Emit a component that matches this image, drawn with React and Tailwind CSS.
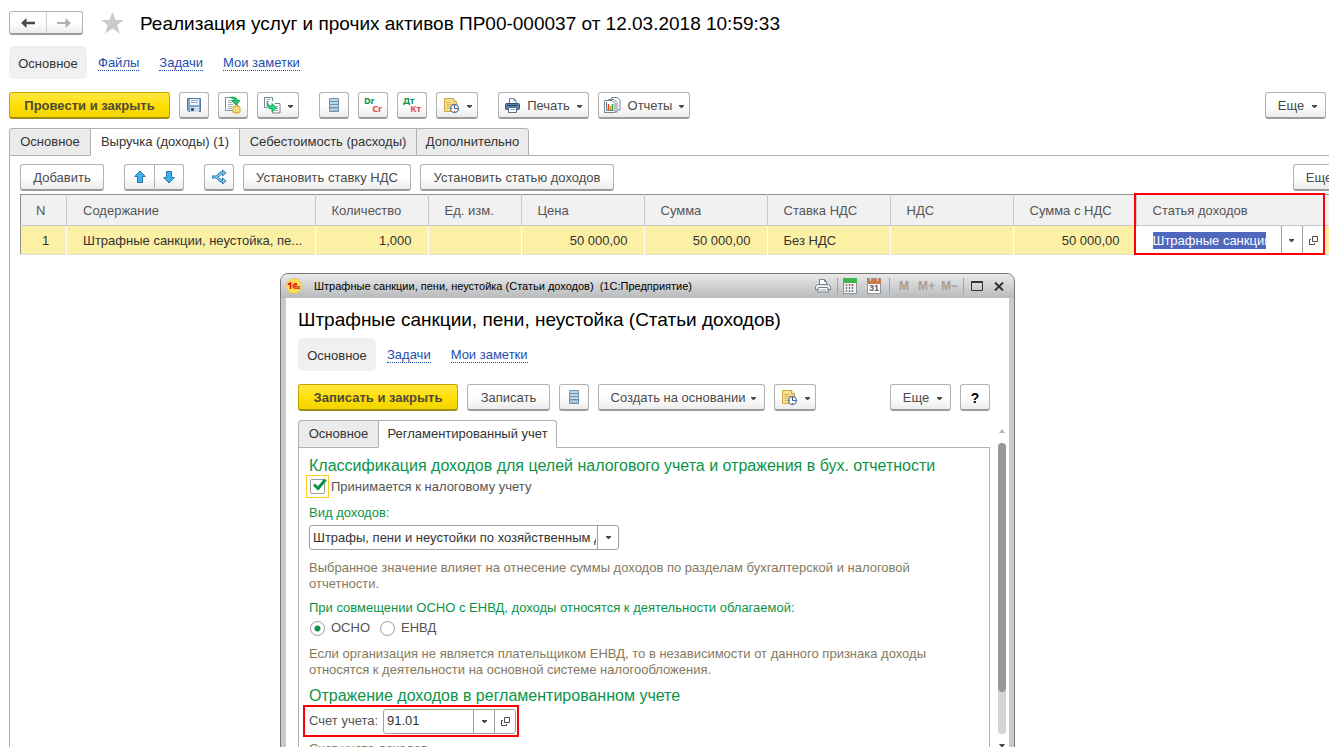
import React from "react";

const btnSkin =
  "flex shrink-0 items-center justify-center rounded-[3px] border border-[#b3b3b3] border-b-2 border-b-[#9c9c9c] bg-linear-to-b from-white from-50% to-[#ececec] text-[#4a4a4a] whitespace-nowrap";
const btnBase = btnSkin + " h-[27px] pt-0.5";
const primaryBtn =
  "flex h-[27px] shrink-0 items-center justify-center rounded-[3px] border border-[#c2a500] border-b-2 border-b-[#a08c10] bg-linear-to-b from-[#ffe83c] via-[#ffe000] to-[#f2d400] pt-0.5 font-bold text-[#4d4a3d] whitespace-nowrap";

function Caret({ className = "" }) {
  return (
    <svg width="5" height="3" viewBox="0 0 5 3" className={"shrink-0 " + className} aria-hidden="true">
      <path d="M0 0h5v1L3 3H2L0 1z" fill="#4a4a4a" />
    </svg>
  );
}

function Btn({ className = "", label, children }) {
  return (
    <button type="button" aria-label={label} className={btnBase + " " + className}>
      {children}
    </button>
  );
}

function SaveIcon() {
  return (
    <svg width="16" height="16" viewBox="0 0 16 16" className="-mt-0.5" aria-hidden="true">
      <path d="M1.500 1.500h13v13h-11.500l-1.500-1.500z" fill="#79a6d3" stroke="#4d78a5" />
      <rect x="4" y="2" width="9" height="6" fill="#f4f8fc" />
      <path d="M5 3.500h7M5 5.500h7" stroke="#8fa9c4" />
      <rect x="4" y="10" width="9" height="5" fill="#d4dde6" />
      <rect x="5" y="11" width="3" height="3" fill="#3d5c80" />
    </svg>
  );
}

function PostIcon() {
  return (
    <svg width="18" height="18" viewBox="0 0 18 18" className="-mt-0.5" aria-hidden="true">
      <path d="M7 1.500H1.500v13H9M13.500 7v3" fill="none" stroke="#7f8f9f" />
      <path d="M4 4.500h3M4 6.500h4M4 8.500h5M4 10.500h4M4 12.500h4" stroke="#a2aab2" />
      <path d="M6 1.500c4-1 7 0 7.500 3H16l-4 4.500-4.500-4.500H10c0-1.500-1.500-2.500-4-3z" fill="#1fc96b" stroke="#0c8f49" strokeWidth=".8" />
      <rect x="9" y="10" width="7" height="7" rx="1.500" fill="#f3cb55" stroke="#c89a26" strokeWidth=".8" />
      <path d="M9.500 12.300h6M9.500 14.700h6" stroke="#fff3c0" />
    </svg>
  );
}

function CreateBasedIcon() {
  return (
    <svg width="17" height="17" viewBox="0 0 17 17" className="-mt-0.5" aria-hidden="true">
      <path d="M3 10.500H.5v-10h8V4" fill="#fff" stroke="#6f8296" />
      <path d="M2.500 2.500h4M2.500 4.500h2" stroke="#9aa7b4" />
      <path d="M11 6.500h5v9.500H8.500v-2" fill="#fff" stroke="#6f8296" />
      <path d="M12 9.500h2M12 11.500h2M11 13.500h3" stroke="#9aa7b4" />
      <path d="M3.500 4.500c.2 3 1.500 4.500 4.500 4.500V6.500l4.500 4.500L8 15v-3c-4 0-6-3-4.500-7.500z" fill="#24d67c" stroke="#0c9a52" strokeWidth=".8" />
    </svg>
  );
}

function ListIcon() {
  return (
    <svg width="12" height="16" viewBox="0 0 12 16" className="-mt-0.5" aria-hidden="true">
      <rect x="1" y="1" width="10" height="14" rx="1" fill="#6f93b0" />
      <path d="M2 3h8M2 6h8M2 9h8M2 12.500h8" stroke="#bdd6e6" strokeWidth="1.800" />
    </svg>
  );
}

function LetterPair({ a, b }) {
  return (
    <span className="-mt-0.5 grid h-4 w-[18px] grid-rows-2 font-['Noto_Sans',sans-serif] text-[9px] leading-[8px] font-bold" aria-hidden="true">
      <span className="text-left text-[#0f9150]">{a}</span>
      <span className="text-right text-[#dd4a4a]">{b}</span>
    </span>
  );
}

function NoteClockIcon() {
  return (
    <svg width="17" height="17" viewBox="0 0 17 17" className="-mt-0.5" aria-hidden="true">
      <path d="M1.500 1.500h9l3 3v10h-12z" fill="#f7df8e" stroke="#cfa744" />
      <path d="M10.500 1.500v3h3" fill="#fff4c4" stroke="#cfa744" />
      <path d="M3.500 5.500h5M3.500 7.500h5M3.500 9.500h3M3.500 11.500h3" stroke="#d9b455" />
      <circle cx="11.500" cy="11.500" r="4" fill="#fff" stroke="#4d7fb0" strokeWidth="1.300" />
      <path d="M11.500 9v2.500H14" fill="none" stroke="#375a80" />
      <path d="M11 8.500h1M8.500 11v1M11 14.500h1M14.500 11v1" stroke="#e03232" />
    </svg>
  );
}

function PrinterIcon() {
  return (
    <svg width="15" height="15" viewBox="0 0 15 15" className="-mt-0.5" aria-hidden="true">
      <path d="M4.500 6V.5H9l2 2V6" fill="#fff" stroke="#6d8094" />
      <path d="M9 .5v2h2" fill="none" stroke="#6d8094" />
      <rect x=".5" y="5.500" width="14" height="6" rx="1" fill="#5a86b0" stroke="#2e5479" />
      <path d="M2 7.500h11" stroke="#27435f" />
      <path d="M3.500 9.500h8v5h-8z" fill="#fff" stroke="#55708b" />
      <path d="M5 11.500h5" stroke="#9aabba" />
    </svg>
  );
}

function ReportsIcon() {
  return (
    <svg width="17" height="17" viewBox="0 0 17 17" className="-mt-0.5" aria-hidden="true">
      <path d="M7.500 3V.5h6l2.500 2.500v10h-2.500" fill="#fff" stroke="#72869a" />
      <path d="M4.500 4V2.500h5.500l3 3v9.500h-2" fill="#fff" stroke="#72869a" />
      <path d="M.5 3.500H8l3 3v9H.5z" fill="#fff" stroke="#72869a" />
      <path d="M2.500 5v8.500h7" fill="none" stroke="#6b7a88" />
      <path d="M4.500 7v6" stroke="#e04a3a" strokeWidth="1.600" />
      <path d="M6.500 9v4" stroke="#d9a520" strokeWidth="1.400" />
      <path d="M8.500 7v6" stroke="#38a838" strokeWidth="1.600" />
    </svg>
  );
}

function BlueArrow({ down }) {
  return (
    <svg width="12" height="14" viewBox="0 0 12 14" className={down ? "-mt-0.5 rotate-180" : "-mt-0.5"} aria-hidden="true">
      <path d="M6 1l5.300 5.500H8.500v6h-5v-6H.7z" fill="#3fb1ee" stroke="#2477a8" strokeLinejoin="round" />
    </svg>
  );
}

function ShareIcon() {
  return (
    <svg width="16" height="16" viewBox="0 0 16 16" className="-mt-0.5" aria-hidden="true">
      <path d="M1 8h4.500L10 4h2M5.500 8l4.500 4h2" fill="none" stroke="#2a78ad" strokeWidth="3" />
      <path d="M11.500 1l3.500 3-3.500 3zM11.500 9l3.500 3-3.500 3z" fill="#8fd4f8" stroke="#2a78ad" strokeLinejoin="round" />
      <path d="M1.500 8h4L10 4h2.500M5.500 8l4.500 4h2.500" fill="none" stroke="#8fd4f8" strokeWidth="1.200" />
    </svg>
  );
}

function OpenIcon() {
  return (
    <svg width="9" height="9" viewBox="0 0 9 9" aria-hidden="true">
      <path d="M3.500.5h5v5h-5zM2 3.500H.5v5h5V7" fill="none" stroke="#4a4a4a" />
    </svg>
  );
}

function OneCLogo() {
  return (
    <svg width="16" height="16" viewBox="0 0 16 16" aria-hidden="true">
      <circle cx="8" cy="8" r="7.600" fill="#ffdf55" stroke="#e3b93a" strokeWidth=".6" />
      <path d="M2 6.500L4.500 5v6" fill="none" stroke="#d91515" strokeWidth="1.600" />
      <path d="M11.300 6.700A2.400 2.400 0 1 0 9.300 10.300H14M10.500 7.400a1 1 0 1 0-1 1.400H14" fill="none" stroke="#d91515" strokeWidth="1.100" />
    </svg>
  );
}

function PrintSmallIcon() {
  return (
    <svg width="16" height="16" viewBox="0 0 16 16" aria-hidden="true">
      <path d="M4.500 8V1.500h5l2 2V8" fill="#fff" stroke="#75808b" />
      <path d="M9.500 1.500v2h2" fill="none" stroke="#75808b" />
      <path d="M2.500 6.500h11l2 2v3h-15v-3z" fill="#e9edf0" stroke="#75808b" />
      <path d="M3.500 9.500h9l1 4.500h-11z" fill="#fff" stroke="#75808b" />
      <path d="M4.500 12h7" stroke="#9aa4ad" />
    </svg>
  );
}

function CalculatorIcon() {
  return (
    <svg width="14" height="16" viewBox="0 0 14 16" aria-hidden="true">
      <rect x=".5" y=".5" width="13" height="15" fill="#f2f4f5" stroke="#8a9299" />
      <rect x="0" y="0" width="14" height="5" fill="#3fb550" />
      <path d="M3.500 6v9M6.500 6v9M9.500 6v9" stroke="#707b84" strokeDasharray="2 1" strokeWidth="1.500" />
      <path d="M9.500 6v2" stroke="#df4b3e" strokeWidth="1.500" />
    </svg>
  );
}

function CalendarIcon() {
  return (
    <span className="relative flex h-4 w-3.5 items-end justify-center border border-[#8d97a0] bg-white text-[9px] leading-[10px] font-bold text-[#57626c]">
      31
      <svg width="14" height="6" viewBox="0 0 14 6" className="absolute -top-px -left-px" aria-hidden="true">
        <path d="M0 1h14v5H0z" fill="#c77b50" />
        <path d="M3.500 0v3M10.500 0v3" stroke="#f4e3d6" />
      </svg>
    </span>
  );
}

function MoreButton({ className = "" }) {
  return (
    <Btn className={"w-[61px] gap-2 pl-1 " + className}>
      Еще
      <Caret />
    </Btn>
  );
}

function NavTabs({ links }) {
  return (
    <nav className="flex h-[33px] items-center pt-px text-[#1d4fae]">
      <span className="-mt-px flex h-[33px] w-[78px] items-center justify-center rounded-[5px] bg-[#f0f0f0] pt-0.5 text-[#333]">Основное</span>
      {links.map((l, i) => (
        <a key={l} href="#" className={"border-b border-dotted border-[#1d4fae] leading-[15px] " + (i === 0 ? "ml-[11px]" : "ml-5")}>
          {l}
        </a>
      ))}
    </nav>
  );
}

function Tabs({ items }) {
  return (
    <div role="tablist" className="relative z-10 -mb-px flex h-7">
      {items.map((t, i) => (
        <button
          key={t.name}
          type="button"
          role="tab"
          aria-selected={!!t.active}
          className={
            "border border-[#b0b0b0] text-[#333] " +
            t.width +
            (i ? " -ml-px" : " rounded-tl-[3px]") +
            (t.active ? " border-b-white bg-white" : " bg-[#ebebeb]") +
            (i === items.length - 1 ? " rounded-tr-[3px]" : "")
          }
        >
          {t.name}
        </button>
      ))}
    </div>
  );
}

const columns = [
  { name: "N", value: "1", width: "w-[46px]", center: true },
  { name: "Содержание", value: "Штрафные санкции, неустойка, пе...", width: "" },
  { name: "Количество", value: "1,000", width: "w-[113px]", right: true },
  { name: "Ед. изм.", value: "", width: "w-[93px]" },
  { name: "Цена", value: "50 000,00", width: "w-[123px]", right: true },
  { name: "Сумма", value: "50 000,00", width: "w-[123px]", right: true },
  { name: "Ставка НДС", value: "Без НДС", width: "w-[123px]" },
  { name: "НДС", value: "", width: "w-[123px]" },
  { name: "Сумма с НДС", value: "50 000,00", width: "w-[123px]", right: true },
];

function ItemsTable() {
  return (
    <table className="w-[calc(100%+41px)] table-fixed border-collapse border-t border-l border-[#8f8f8f]">
      <colgroup>
        {columns.map((c) => (
          <col key={c.name} className={c.width} />
        ))}
        <col className="w-[188px]" />
        <col className="w-[46px]" />
      </colgroup>
      <thead>
        <tr className="h-[31px] bg-[#f1f1f1] text-[#555]">
          {columns.map((c) => (
            <th key={c.name} className={"border-r border-b border-[#c8c8c8] pt-0.5 text-left font-normal whitespace-nowrap " + (c.center ? "pl-[15px]" : "pl-4")}>
              {c.name}
            </th>
          ))}
          <th className="relative border-r border-b border-[#c8c8c8] pt-0.5 pl-4 text-left font-normal">
            <span id="income-col">Статья доходов</span>
            <span className="pointer-events-none absolute -top-0.5 -right-px -left-[3px] z-10 h-[62px] border-2 border-[#fb0007]" />
          </th>
          <th className="border-b border-[#c8c8c8]" />
        </tr>
      </thead>
      <tbody>
        <tr className="h-[29px] border-b border-[#dcdcdc] bg-[#fcf0a5] text-[#333]">
          {columns.map((c) => (
            <td key={c.name} className={"border-r border-white pt-0.5 whitespace-nowrap " + (c.right ? "pr-4 text-right" : c.center ? "pl-1 text-center" : "pl-4")}>
              {c.value}
            </td>
          ))}
          <td className="border-r border-white bg-white p-0">
            <div className="flex h-7 items-center">
              <input
                aria-labelledby="income-col"
                defaultValue="Штрафные санкции, пени, неустойка"
                className="ml-4 h-[17px] w-0 flex-1 bg-[#5067be] text-white outline-none"
              />
              <button type="button" aria-label="Выбрать из списка" className="ml-[15px] flex h-full w-[21px] items-center justify-center border-l border-[#a0a0a0]">
                <Caret />
              </button>
              <button type="button" aria-label="Открыть" className="flex h-full w-[22px] items-center justify-center border-l border-[#a0a0a0]">
                <OpenIcon />
              </button>
            </div>
          </td>
          <td />
        </tr>
      </tbody>
    </table>
  );
}

function TitleBar() {
  const sep = "h-4 w-px bg-[#a3a3a3]";
  return (
    <div className="flex h-[24px] items-center rounded-t-[7px] bg-linear-to-b from-[#e9e9ea] to-[#b9babb] px-[5px] text-[11px] text-black">
      <OneCLogo />
      <span className="ml-3 whitespace-pre">Штрафные санкции, пени, неустойка (Статьи доходов)  (1С:Предприятие)</span>
      <div className="mr-[5px] ml-auto flex items-center text-xs font-bold text-[#a99c94]">
        <button type="button" aria-label="Печать" className="mr-1.5"><PrintSmallIcon /></button>
        <span className={sep} />
        <button type="button" aria-label="Калькулятор" className="ml-[5px]"><CalculatorIcon /></button>
        <button type="button" aria-label="Календарь" className="mr-2 ml-2.5"><CalendarIcon /></button>
        <span className={sep} />
        <button type="button" className="ml-2 w-3">M</button>
        <button type="button" className="ml-2 w-4">M+</button>
        <button type="button" className="mr-1.5 ml-[7px] w-4">M−</button>
        <span className={sep} />
        <button type="button" aria-label="Развернуть" className="ml-[7px]">
          <svg width="12" height="10" viewBox="0 0 12 10" aria-hidden="true">
            <path d="M.5 1h11v8.500H.5z" fill="none" stroke="#333" />
            <path d="M0 1h12" stroke="#333" strokeWidth="2" />
          </svg>
        </button>
        <button type="button" aria-label="Закрыть" className="ml-[11px]">
          <svg width="10" height="9" viewBox="0 0 10 9" aria-hidden="true">
            <path d="M1 .5l8 8M9 .5l-8 8" stroke="#333" strokeWidth="2" />
          </svg>
        </button>
      </div>
    </div>
  );
}

function TaxForm() {
  return (
    <form className="flex-1 border border-b-0 border-[#b0b0b0] px-2.5 text-[#555]">
      <h2 className="mt-2 text-base leading-[19px] text-[#0b9448]">Классификация доходов для целей налогового учета и отражения в бух. отчетности</h2>
      <div className="-ml-[3px] flex h-[23px] items-center">
        <span className="relative flex h-[23px] w-[23px] items-center justify-center border border-[#ffcb1f]">
          <input id="taxable" type="checkbox" defaultChecked className="h-[15px] w-[15px] appearance-none rounded-[2px] border border-[#9a9a9a] bg-white outline-none" />
          <svg width="14" height="12" viewBox="0 0 14 12" className="pointer-events-none absolute top-[3px] left-[6px]" aria-hidden="true">
            <path d="M1 5.500l4 4 7.500-9" fill="none" stroke="#0b9448" strokeWidth="3" />
          </svg>
        </span>
        <label htmlFor="taxable" className="ml-0.5">Принимается к налоговому учету</label>
      </div>
      <label htmlFor="kind" className="mt-1.5 block leading-[18px] text-[#0b9448]">Вид доходов:</label>
      <div className="relative mt-[3px] flex h-[25px] w-[310px] rounded-[3px] border border-[#a0a0a0]">
        <select id="kind" className="w-full appearance-none overflow-hidden bg-transparent pr-[22px] pl-[3px] text-[#333] outline-none">
          <option>Штрафы, пени и неустойки по хозяйственным договорам</option>
        </select>
        <span className="pointer-events-none absolute top-0 right-0 flex h-full w-[21px] items-center justify-center border-l border-[#a0a0a0]">
          <Caret />
        </span>
      </div>
      <p className="mt-2.5 max-w-[640px] leading-4 text-[#857a60]">
        Выбранное значение влияет на отнесение суммы доходов по разделам бухгалтерской и налоговой отчетности.
      </p>
      <fieldset>
        <legend className="pt-[7px] leading-[18px] text-[#0b9448]">При совмещении ОСНО с ЕНВД, доходы относятся к деятельности облагаемой:</legend>
        <div className="mt-px flex h-[20px] items-center">
          <input id="osno" name="mode" type="radio" defaultChecked className="ml-px h-[15px] w-[15px] appearance-none rounded-full border border-[#9a9a9a] bg-white bg-radial from-[#0b9448] from-28% to-white to-38%" />
          <label htmlFor="osno" className="ml-1.5 w-[49px]">ОСНО</label>
          <input id="envd" name="mode" type="radio" className="h-[15px] w-[15px] appearance-none rounded-full border border-[#9a9a9a] bg-white" />
          <label htmlFor="envd" className="ml-1.5">ЕНВД</label>
        </div>
      </fieldset>
      <p className="mt-2 max-w-[640px] leading-4 text-[#857a60]">
        Если организация не является плательщиком ЕНВД, то в независимости от данного признака доходы относятся к деятельности на основной системе налогообложения.
      </p>
      <h2 className="mt-2 text-base leading-[19px] text-[#0b9448]">Отражение доходов в регламентированном учете</h2>
      <div className="-ml-1.5 flex h-8 w-[216px] items-center border-2 border-[#fb0007] pl-1">
        <label htmlFor="account">Счет учета:</label>
        <div className="mr-px ml-auto flex h-[25px] w-[133px] rounded-[3px] border border-[#a0a0a0]">
          <input id="account" defaultValue="91.01" className="w-0 flex-1 bg-transparent pl-[3px] text-[#333] outline-none" />
          <button type="button" aria-label="Выбрать счет" className="flex w-[21px] items-center justify-center border-l border-[#a0a0a0]">
            <Caret />
          </button>
          <button type="button" aria-label="Открыть счет" className="flex w-[21px] items-center justify-center border-l border-[#a0a0a0]">
            <OpenIcon />
          </button>
        </div>
      </div>
      <p className="mt-1 leading-4 text-[#857a60]">Счет учета доходов.</p>
    </form>
  );
}

function Dialog() {
  return (
    <section
      role="dialog"
      aria-label="Штрафные санкции, пени, неустойка (Статьи доходов)"
      className="absolute top-[273px] left-[280px] flex h-[520px] w-[735px] flex-col rounded-t-[8px] border border-[#77787a] bg-[#c9cacc]"
    >
      <TitleBar />
      <div className="mx-[5px] flex flex-1 bg-white pl-3">
        <div className="flex flex-1 flex-col">
          <h1 className="mt-2.5 text-[19px] leading-6 text-black">Штрафные санкции, пени, неустойка (Статьи доходов)</h1>
          <div className="mt-1.5">
            <NavTabs links={["Задачи", "Мои заметки"]} />
          </div>
          <div className="mt-[13px] flex gap-[9px]">
            <button type="button" className={primaryBtn + " w-[160px]"}>Записать и закрыть</button>
            <Btn className="w-[83px]">Записать</Btn>
            <Btn label="Список" className="w-[30px]"><ListIcon /></Btn>
            <Btn className="w-[167px] gap-1.5 pl-1">Создать на основании<Caret /></Btn>
            <Btn label="Напоминание" className="w-[42px] gap-[7px]"><NoteClockIcon /><Caret /></Btn>
            <MoreButton className="ml-auto" />
            <Btn className="w-[30px] text-sm font-bold text-black">?</Btn>
          </div>
          <div className="mt-[9px] flex flex-1 flex-col">
            <Tabs items={[{ name: "Основное", width: "w-[81px]" }, { name: "Регламентированный учет", width: "w-[179px]", active: true }]} />
            <TaxForm />
          </div>
        </div>
        <div className="mt-[131px] flex w-[19px] flex-col items-center pl-1">
          <svg width="6" height="4" viewBox="0 0 6 4" aria-hidden="true"><path d="M3 0l3 4H0z" fill="#b5b5b5" /></svg>
          <div className="mt-2.5 h-[291px] w-2 rounded-full bg-[#d5d5d5]">
            <div className="h-[249px] rounded-full bg-[#999]" />
          </div>
          <svg width="6" height="4" viewBox="0 0 6 4" className="mt-2.5" aria-hidden="true"><path d="M0 0h6L3 4z" fill="#4a4a4a" /></svg>
        </div>
      </div>
    </section>
  );
}

export default function App() {
  return (
    <div className="relative h-screen overflow-hidden bg-white font-['Liberation_Sans',Arial,sans-serif] text-[13px] leading-4 text-[#333]">
      <div className="pl-[9px]">
        <header className="flex h-[46px] items-center">
          <div className={btnSkin + " h-6 w-[74px]"}>
            <button type="button" aria-label="Назад" className="flex h-full flex-1 items-center justify-center">
              <svg width="14" height="10" viewBox="0 0 14 10" aria-hidden="true"><path d="M5.500 0v3.700H14v2.600H5.500V10L0 5z" fill="#4a4a4a" /></svg>
            </button>
            <button type="button" aria-label="Вперед" className="flex h-full flex-1 items-center justify-center border-l border-[#d0d0d0]">
              <svg width="14" height="10" viewBox="0 0 14 10" aria-hidden="true"><path d="M8.500 0v4H0v2h8.500v4L14 5z" fill="#b0b0b0" /></svg>
            </button>
          </div>
          <button type="button" aria-label="В избранное" className="ml-[18px]">
            <svg width="23" height="22" viewBox="0 0 23 22" aria-hidden="true">
              <path d="M11.500 0l3 8h8.500l-6.800 5.100 2.500 8.400-7.200-5-7.200 5 2.500-8.400L0 8h8.500z" fill="#c9cacc" />
            </svg>
          </button>
          <h1 className="mt-0.5 ml-4 text-[19px] leading-6 text-black">Реализация услуг и прочих активов ПР00-000037 от 12.03.2018 10:59:33</h1>
        </header>
        <NavTabs links={["Файлы", "Задачи", "Мои заметки"]} />
        <div className="mt-[13px] flex gap-[9px] pr-[3px]">
          <button type="button" className={primaryBtn + " w-[161px]"}>Провести и закрыть</button>
          <Btn label="Записать" className="w-[30px]"><SaveIcon /></Btn>
          <Btn label="Провести" className="w-[30px]"><PostIcon /></Btn>
          <Btn label="Создать на основании" className="mr-[11px] w-[42px] gap-[7px]"><CreateBasedIcon /><Caret /></Btn>
          <Btn label="Список" className="w-[30px]"><ListIcon /></Btn>
          <Btn label="Dr Cr" className="w-[30px]"><LetterPair a="Dr" b="Cr" /></Btn>
          <Btn label="Дт Кт" className="w-[30px]"><LetterPair a="Дт" b="Кт" /></Btn>
          <Btn label="Напоминание" className="mr-[11px] w-[42px] gap-[7px]"><NoteClockIcon /><Caret /></Btn>
          <Btn className="w-[91px] gap-[7px]"><PrinterIcon />Печать<Caret /></Btn>
          <Btn className="w-[92px] gap-[7px]"><ReportsIcon />Отчеты<Caret /></Btn>
          <MoreButton className="ml-auto" />
        </div>
        <main className="mt-[9px]">
          <Tabs
            items={[
              { name: "Основное", width: "w-[82px]" },
              { name: "Выручка (доходы) (1)", width: "w-[150px]", active: true },
              { name: "Себестоимость (расходы)", width: "w-[178px]" },
              { name: "Дополнительно", width: "w-[113px]" },
            ]}
          />
          <div className="h-[600px] border-t border-l border-[#b0b0b0] pt-2 pl-2.5">
            <div className="flex gap-[9px]">
              <Btn className="mr-[11px] w-[84px]">Добавить</Btn>
              <div className="mr-[11px] flex">
                <Btn label="Вверх" className="w-[31px] rounded-r-none"><BlueArrow /></Btn>
                <Btn label="Вниз" className="-ml-px w-[30px] rounded-l-none"><BlueArrow down /></Btn>
              </div>
              <Btn label="Разбить строку" className="w-[30px]"><ShareIcon /></Btn>
              <Btn className="w-[168px]">Установить ставку НДС</Btn>
              <Btn className="w-[194px]">Установить статью доходов</Btn>
              <MoreButton className="-mr-[25px] ml-auto" />
            </div>
            <div className="mt-[3px]">
              <ItemsTable />
            </div>
          </div>
        </main>
      </div>
      <Dialog />
    </div>
  );
}
